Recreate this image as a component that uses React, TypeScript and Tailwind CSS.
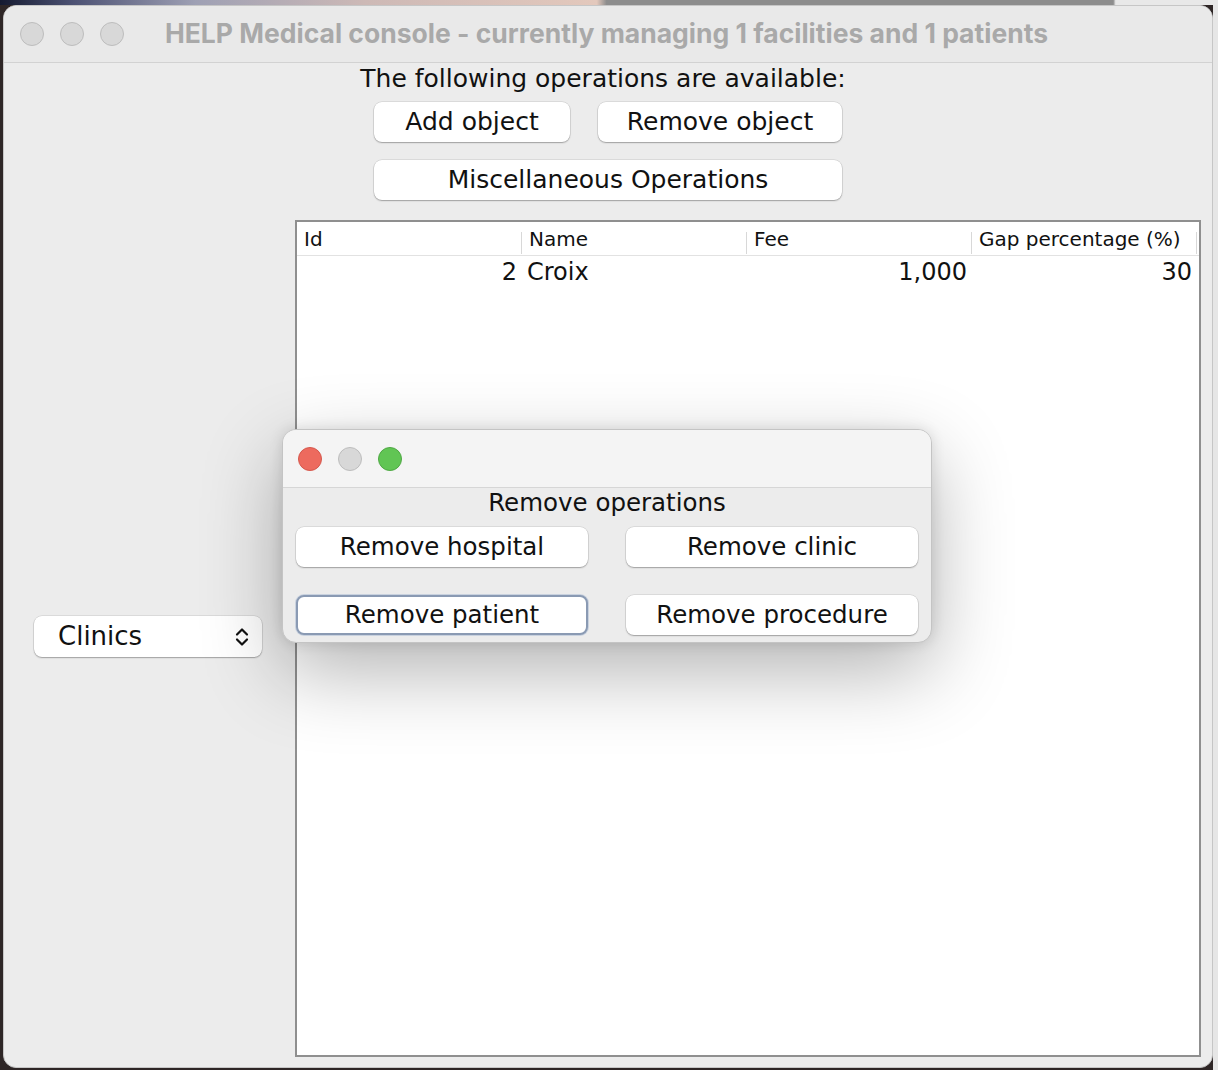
import React from 'react';

const swing = { fontFamily: '"DejaVu Sans", "Liberation Sans", sans-serif' };

function Light({ color }: { color: 'gray' | 'red' | 'green' }) {
  const cls =
    color === 'red'
      ? 'bg-[#ed6a5e] border-[#d5584d]'
      : color === 'green'
        ? 'bg-[#61c554] border-[#4fa844]'
        : 'bg-[#d8d8d8] border-[#bdbdbd]';
  return <span className={`block w-[24px] h-[24px] rounded-full border ${cls}`} />;
}

function Btn({ label, focused = false, className = '' }: { label: string; focused?: boolean; className?: string }) {
  return (
    <button
      className={`h-[40px] rounded-[8px] bg-white text-[#111] flex items-center justify-center ${
        focused
          ? 'border-2 border-[#8a9ab3] shadow-[0_0_0_1px_#c9d2df]'
          : 'shadow-[0_0_0_0.5px_rgba(0,0,0,0.14),0_1px_1.5px_rgba(0,0,0,0.28)]'
      } ${className}`}
    >
      {label}
    </button>
  );
}

const columns = [
  { head: 'Id', cell: '2', align: 'right' },
  { head: 'Name', cell: 'Croix', align: 'left' },
  { head: 'Fee', cell: '1,000', align: 'right' },
  { head: 'Gap percentage (%)', cell: '30', align: 'right' },
];

export default function App() {
  return (
    <div className="w-[1218px] h-[1070px] overflow-hidden flex flex-col bg-[#2e2626]" style={swing}>
      <div className="h-[5px] shrink-0 bg-[linear-gradient(90deg,#151a30_0%,#4c5173_6%,#9ea0b4_16%,#cdb9b6_30%,#e3c8bc_49%,#8d8d8d_49.8%,#8d8d8d_91.4%,#e8e8e8_91.6%)]" />
      <div className="flex flex-1 min-h-0">
        <div className="w-[3px] shrink-0" />

        {/* main window */}
        <div className="relative w-[1210px] h-[1063px] rounded-[13px] border border-[#c6c6c6] bg-[#ececec] flex flex-col overflow-hidden">
          <div className="h-[57px] shrink-0 bg-[#e9e9e9] border-b border-[#d2d2d2] grid grid-cols-[1fr_auto_1fr] items-center">
            <div className="flex gap-[16px] pl-[16px]">
              <Light color="gray" />
              <Light color="gray" />
              <Light color="gray" />
            </div>
            <div
              className="text-[26.5px] font-bold text-[#a9a9a9] whitespace-nowrap pr-[3px]"
              style={{ fontFamily: 'Inter, "Liberation Sans", sans-serif' }}
            >
              HELP Medical console - currently managing 1 facilities and 1 patients
            </div>
            <div />
          </div>

          <div className="flex flex-col flex-1 min-h-0 text-[25px] text-[#111]">
            <div className="h-[32px] flex items-center justify-center pr-[10px]">The following operations are available:</div>
            <div className="flex justify-center gap-[28px] mt-[7px]">
              <Btn label="Add object" className="w-[196px]" />
              <Btn label="Remove object" className="w-[244px]" />
            </div>
            <div className="flex justify-center mt-[18px]">
              <Btn label="Miscellaneous Operations" className="w-[468px]" />
            </div>

            <div className="flex flex-1 min-h-0 mt-[20px] pb-[10px] pr-[11px]">
              <div className="w-[291px] shrink-0 flex items-center pl-[30px] pb-[4px]">
                <div className="w-[228px] h-[41px] rounded-[8px] bg-white shadow-[0_0_0_0.5px_rgba(0,0,0,0.14),0_1px_1.5px_rgba(0,0,0,0.28)] flex items-center justify-between pl-[24px] pr-[12px] text-[26px]">
                  <span>Clinics</span>
                  <svg width="16" height="24" viewBox="0 0 16 24" fill="none" stroke="#111" strokeWidth="2.2" strokeLinecap="round" strokeLinejoin="round">
                    <path d="M3 9.5 8 4.5l5 5" />
                    <path d="M3 14.5 8 19.5l5-5" />
                  </svg>
                </div>
              </div>

              <div className="flex-1 border-2 border-[#8f8f8f] bg-white flex flex-col">
                <div className="h-[34px] border-b border-[#e2e2e2] flex text-[20px]">
                  {columns.map((c) => (
                    <div key={c.head} className="w-[225px] flex items-center justify-between pl-[7px]">
                      <span>{c.head}</span>
                      <span className="w-px h-[22px] mt-[8px] bg-[#d8d8d8]" />
                    </div>
                  ))}
                </div>
                <div className="h-[32px] flex text-[24px]">
                  {columns.map((c) => (
                    <div
                      key={c.head}
                      className={`w-[225px] flex items-center px-[5px] ${c.align === 'right' ? 'justify-end' : 'justify-start'}`}
                    >
                      {c.cell}
                    </div>
                  ))}
                </div>
              </div>
            </div>
          </div>

          {/* Remove operations dialog */}
          <div className="absolute left-[278px] top-[423px] w-[650px] h-[214px] rounded-[14px] border border-[#c4c4c4] bg-[#ececec] overflow-hidden flex flex-col shadow-[0_28px_80px_rgba(0,0,0,0.3),0_0_14px_rgba(0,0,0,0.12)]">
            <div className="h-[58px] shrink-0 bg-[#f4f4f4] border-b border-[#d6d6d6] flex items-center gap-[16px] pl-[15px]">
              <Light color="red" />
              <Light color="gray" />
              <Light color="green" />
            </div>
            <div className="text-[24.5px] text-[#111] flex flex-col px-[13px]">
              <div className="h-[31px] flex items-center justify-center">Remove operations</div>
              <div className="grid grid-cols-[292px_292px] justify-between mt-[8px] gap-y-[28px]">
                <Btn label="Remove hospital" />
                <Btn label="Remove clinic" />
                <Btn label="Remove patient" focused />
                <Btn label="Remove procedure" />
              </div>
            </div>
          </div>
        </div>

        <div className="flex-1 bg-[#e6e6e6]" />
      </div>
    </div>
  );
}
